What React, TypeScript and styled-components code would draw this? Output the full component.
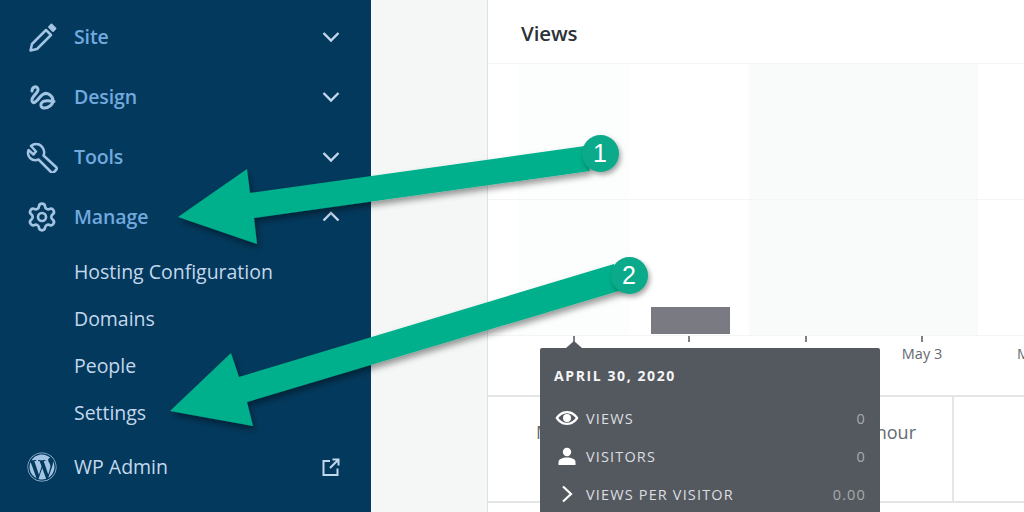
import React from "react";
import styled, { createGlobalStyle } from "styled-components";
import { Settings } from "lucide-react";
import { FaWordpress } from "react-icons/fa";

const Global = createGlobalStyle`
  html, body { margin: 0; padding: 0; width: 1024px; height: 512px; overflow: hidden; background: #f5f7f7; }
  * { box-sizing: border-box; }
`;

const Page = styled.div`
  position: relative;
  width: 1024px;
  height: 512px;
  display: flex;
  overflow: hidden;
  font-family: "Open Sans", "Noto Sans", sans-serif;
`;

const Sidebar = styled.nav`
  width: 371px;
  flex: none;
  background: #03395c;
  padding: 7px 31px 0 26px;
  display: flex;
  flex-direction: column;
`;

const Row = styled.div`
  height: 60px;
  display: flex;
  align-items: center;
  flex: none;
`;

const IconBox = styled.span`
  width: 32px;
  height: 32px;
  margin-right: 16px;
  flex: none;
  color: #a3c4e2;
  display: flex;
  align-items: center;
  justify-content: center;
`;

const RowLabel = styled.span<{ $admin?: boolean }>`
  flex: 1;
  font-size: 19.5px;
  line-height: 26px;
  font-weight: ${(p) => (p.$admin ? 400 : 600)};
  letter-spacing: ${(p) => (p.$admin ? "0" : "-0.1px")};
  color: ${(p) => (p.$admin ? "#c3d8ec" : "#72a9df")};
`;

const Trail = styled.span`
  width: 18px;
  height: 18px;
  flex: none;
  color: #c3d8ec;
  display: flex;
`;

const SubList = styled.div`
  padding: 1.5px 0 0 48px;
  display: flex;
  flex-direction: column;
`;

const SubItem = styled.div`
  height: 47px;
  display: flex;
  align-items: center;
  padding-bottom: 2px;
  font-size: 19.5px;
  letter-spacing: -0.02px;
  color: #c3d8ec;
`;

const Gutter = styled.div`
  width: 117px;
  flex: none;
  background: #f5f7f7;
  border-right: 1px solid #dfe1e2;
`;

const Main = styled.main`
  flex: 1;
  background: #fff;
  display: flex;
  flex-direction: column;
  position: relative;
`;

const CardHead = styled.header`
  height: 63px;
  flex: none;
  padding-left: 33px;
  display: flex;
  align-items: center;
  padding-top: 3px;
  font-size: 20.5px;
  font-weight: 600;
  letter-spacing: -0.1px;
  color: #2c3338;
`;

const ChartSvg = styled.svg`
  display: block;
  flex: none;
  width: 536px;
  height: 332px;
`;

const AxisLabel = styled.text`
  font-family: "Open Sans", sans-serif;
  font-size: 14.5px;
  fill: #646970;
`;

const Stats = styled.div`
  height: 108px;
  flex: none;
  display: grid;
  grid-template-columns: 466px 1fr;
  border-top: 2px solid #e4e5e6;
  border-bottom: 2px solid #e4e5e6;
`;

const StatCell = styled.div`
  border-right: 2px solid #e4e5e6;
  padding: 23px 36px 0 48px;
  font-size: 18px;
  color: #646970;
  display: flex;
  justify-content: space-between;
  &:last-child { border-right: none; }
`;

const Tooltip = styled.aside`
  position: absolute;
  left: 540px;
  top: 348px;
  width: 340px;
  height: 180px;
  background: #54595f;
  border-radius: 2px;
  padding: 18px 14px 0 14px;
  color: #e6e8ea;
  &::before {
    content: "";
    position: absolute;
    left: 26px;
    top: -7px;
    border-left: 8px solid transparent;
    border-right: 8px solid transparent;
    border-bottom: 7px solid #54595f;
  }
`;

const TipTitle = styled.div`
  font-size: 14px;
  font-weight: 700;
  letter-spacing: 1.6px;
  color: #f4f5f6;
  margin-bottom: 13px;
  line-height: 20px;
`;

const TipRow = styled.div`
  height: 38px;
  display: flex;
  align-items: center;
  font-size: 14.5px;
  letter-spacing: 1.15px;
  color: #dcdee0;
`;

const TipIcon = styled.span`
  width: 32px;
  flex: none;
  display: flex;
  justify-content: center;
  padding-right: 7px;
  color: #fff;
`;

const TipName = styled.span`
  flex: 1;
`;

const TipValue = styled.span`
  color: #a7aaad;
`;

const Annotation = styled.svg`
  position: absolute;
  inset: 0;
  width: 1024px;
  height: 512px;
  pointer-events: none;
`;

const Badge = styled.div<{ $x: number; $y: number }>`
  position: absolute;
  left: ${(p) => p.$x - 18.5}px;
  top: ${(p) => p.$y - 18.5}px;
  width: 37px;
  height: 37px;
  border-radius: 50%;
  background: #0aaa8a;
  color: #fff;
  font-family: "Liberation Sans", Arial, sans-serif;
  font-size: 25px;
  display: flex;
  align-items: center;
  justify-content: center;
  box-shadow: 2px 3px 5px rgba(0, 0, 0, 0.35);
`;

const Stroke = { fill: "none", stroke: "currentColor", strokeWidth: 2.5, strokeLinecap: "round", strokeLinejoin: "round" } as const;

const Pencil = () => (
  <svg width="32" height="32" viewBox="0 0 32 32">
    <path {...Stroke} d="M4.500 29.500l1.500-6.500L20 9l5 5-14 14z" />
    <path d="M23 6l2.500-2.500 4 4L27 10z" fill="currentColor" stroke="currentColor" strokeWidth="1.800" strokeLinejoin="round" />
  </svg>
);

const Squiggle = () => (
  <svg width="32" height="32" viewBox="0 0 32 32">
    <path {...Stroke} strokeWidth={3} d="M6 10C6 6 11 4 12 8 13 12 5 15 6 20 7 24 11 20 14 16 17 12 20 11 24 14 28 17 28 22 24 25 20 28 14 28 15 23 16 20 21 19 28 20.500" />
  </svg>
);

const Wrench = () => (
  <svg width="32" height="32" viewBox="0 0 32 32">
    <path {...Stroke} d="M13 3.500a8 8 0 0 0-8 1.500L10 10.500 7.500 13.500 2.500 9a8 8 0 0 0 1.500 8 8 8 0 0 0 8.500 1.500L25 31c1 1 2 1 3 0l2-2c1-1 1-2 0-3L17.500 14.500a8 8 0 0 0-1-8 8 8 0 0 0-3.500-3z" />
  </svg>
);

const ChevDown = () => (
  <svg width="18" height="18" viewBox="0 0 18 18"><path d="M1.500 5l7.500 7.500L16.500 5" fill="none" stroke="currentColor" strokeWidth="2.400" /></svg>
);
const ChevUp = () => (
  <svg width="18" height="18" viewBox="0 0 18 18"><path d="M1.500 12.500L9 5l7.500 7.500" fill="none" stroke="currentColor" strokeWidth="2.400" /></svg>
);
const External = () => (
  <svg width="18" height="18" viewBox="0 0 18 18">
    <path d="M8 3H1.500v14h14v-6.500M10.500 1.500h6v6M16.500 1.500L8 10" fill="none" stroke="currentColor" strokeWidth="2" />
  </svg>
);

const Eye = () => (
  <svg width="24" height="16" viewBox="0 0 24 16">
    <path d="M12 1C6.500 1 2.500 4.500.500 8 2.500 11.500 6.500 15 12 15s9.500-3.500 11.500-7C21.500 4.500 17.500 1 12 1zm0 2.200c3.800 0 6.800 2.200 8.700 4.800-1.900 2.600-4.900 4.800-8.700 4.800S5.200 10.600 3.300 8C5.200 5.400 8.200 3.200 12 3.200z" fill="currentColor" />
    <circle cx="12" cy="8" r="4" fill="currentColor" />
  </svg>
);
const Person = () => (
  <svg width="18" height="18" viewBox="0 0 18 18">
    <circle cx="9" cy="5" r="4.200" fill="currentColor" />
    <path d="M.500 18v-3c0-3 4-4.500 8.500-4.500s8.500 1.500 8.500 4.500v3z" fill="currentColor" />
  </svg>
);
const ChevTip = () => (
  <svg width="12" height="18" viewBox="0 0 12 18"><path d="M2 1.500L10 9l-8 7.500" fill="none" stroke="currentColor" strokeWidth="2.200" /></svg>
);

const menu = [
  { label: "Site", icon: <Pencil />, trail: <ChevDown /> },
  { label: "Design", icon: <Squiggle />, trail: <ChevDown /> },
  { label: "Tools", icon: <Wrench />, trail: <ChevDown /> },
  { label: "Manage", icon: <Settings size={32} strokeWidth={2} />, trail: <ChevUp /> },
];
const subs = ["Hosting Configuration", "Domains", "People", "Settings"];
const ticks = [86, 201, 318, 434];
const tipRows = [
  { name: "VIEWS", value: "0", icon: <Eye /> },
  { name: "VISITORS", value: "0", icon: <Person /> },
  { name: "VIEWS PER VISITOR", value: "0.00", icon: <ChevTip /> },
];

export default function App() {
  return (
    <Page>
      <Global />
      <Sidebar>
        {menu.map((m) => (
          <Row key={m.label}>
            <IconBox>{m.icon}</IconBox>
            <RowLabel>{m.label}</RowLabel>
            <Trail>{m.trail}</Trail>
          </Row>
        ))}
        <SubList>
          {subs.map((s) => (
            <SubItem key={s}>{s}</SubItem>
          ))}
        </SubList>
        <Row>
          <IconBox><FaWordpress size={30} /></IconBox>
          <RowLabel $admin>WP Admin</RowLabel>
          <Trail><External /></Trail>
        </Row>
      </Sidebar>
      <Gutter />
      <Main>
        <CardHead>Views</CardHead>
        <ChartSvg viewBox="0 0 536 332">
          <rect x="30" y="1" width="111" height="271" fill="#fcfdfd" />
          <rect x="261" y="1" width="229" height="271" fill="#f9fafa" />
          <path d="M0 .5H536M0 136.500H536M0 272.500H536" stroke="#f3f4f5" strokeWidth="1" />
          <rect x="163" y="244" width="79" height="27" fill="#7a7b82" />
          {ticks.map((t) => (
            <path key={t} d={`M${t} 273v6`} stroke="#50575e" strokeWidth="1.500" />
          ))}
          <AxisLabel x="434" y="296" textAnchor="middle">May 3</AxisLabel>
          <AxisLabel x="529" y="296">M</AxisLabel>
        </ChartSvg>
        <Stats>
          <StatCell><span>M</span><span>hour</span></StatCell>
          <StatCell />
        </Stats>
      </Main>
      <Tooltip>
        <TipTitle>APRIL 30, 2020</TipTitle>
        {tipRows.map((r) => (
          <TipRow key={r.name}>
            <TipIcon>{r.icon}</TipIcon>
            <TipName>{r.name}</TipName>
            <TipValue>{r.value}</TipValue>
          </TipRow>
        ))}
      </Tooltip>
      <Annotation viewBox="0 0 1024 512">
        <defs>
          <filter id="sh" x="-10%" y="-30%" width="120%" height="170%">
            <feDropShadow dx="2" dy="4" stdDeviation="3" floodColor="#000" floodOpacity="0.4" />
          </filter>
        </defs>
        <path filter="url(#sh)" fill="#05b08c" d="M178 217L247 169L250 193L585 146L590 171L254 218L257 244Z" />
        <path filter="url(#sh)" fill="#05b08c" d="M170 411L231 353L239 377L614 264L622 290L247 402L253 426Z" />
      </Annotation>
      <Badge $x={600} $y={153}>1</Badge>
      <Badge $x={629} $y={275}>2</Badge>
    </Page>
  );
}
